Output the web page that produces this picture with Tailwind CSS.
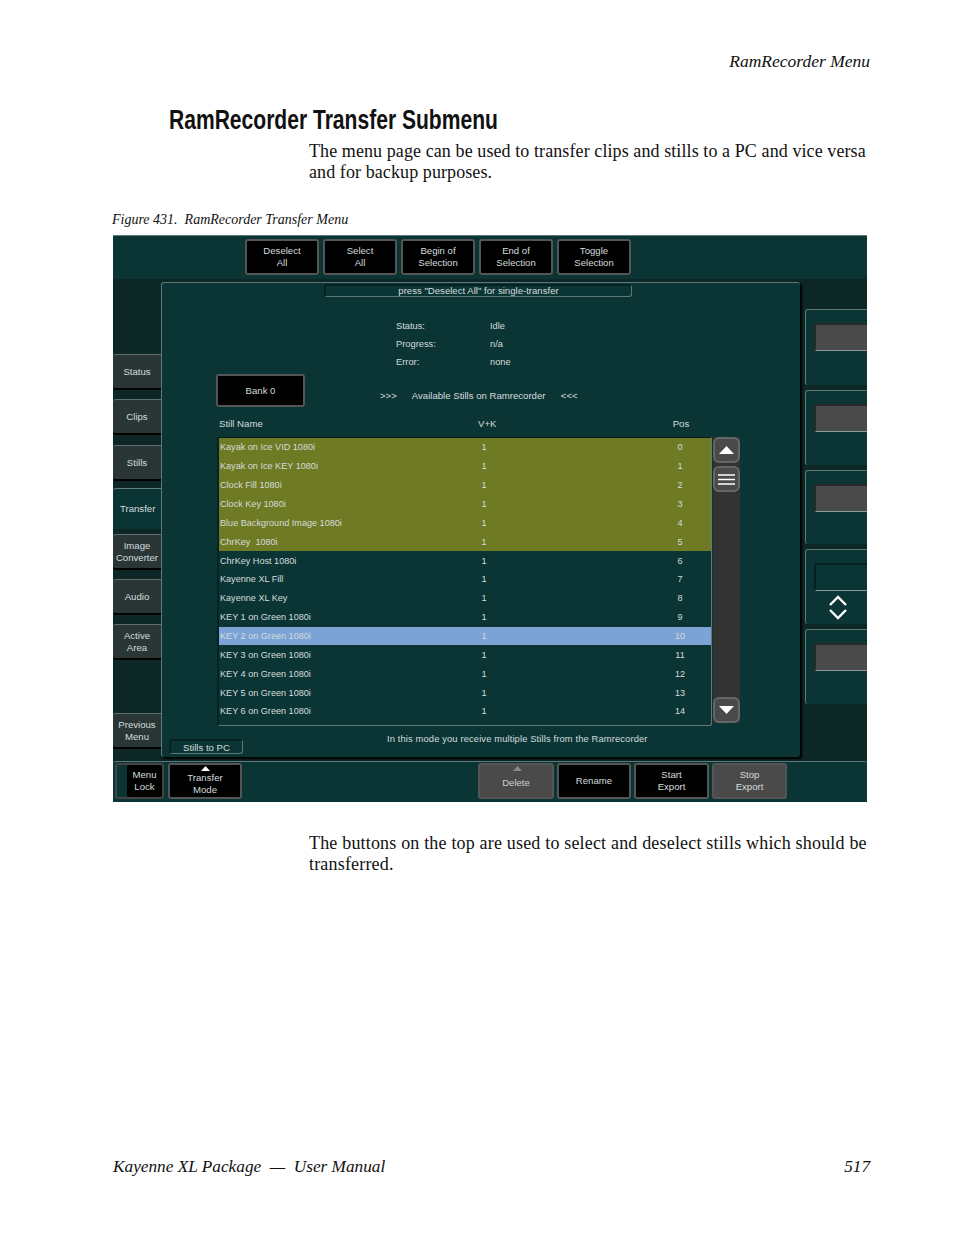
<!DOCTYPE html>
<html lang="en">
<head>
    <meta charset="UTF-8">
    <title>RamRecorder Transfer Submenu</title>
    <script src="https://cdn.jsdelivr.net/npm/@tailwindcss/browser@4"></script>
</head>
<body class="bg-white text-[#111] font-['Liberation_Serif',serif] w-[954px] h-[1235px] overflow-hidden">

    <!-- Running head -->
    <div class="pt-[51px] pr-[84px] h-[105px] text-right italic text-[17.5px] leading-[20px]">RamRecorder Menu</div>

    <h1 class="ml-[169px] pt-[1px] h-[31px] w-[421px] origin-left scale-x-[0.78] whitespace-nowrap font-['Liberation_Sans',sans-serif] font-bold text-[27px] leading-[29px]">RamRecorder Transfer Submenu</h1>

    <p class="ml-[309px] mt-[5px] w-[570px] text-[18px] leading-[21px] h-[41px] tracking-[0.09px]">The menu page can be used to transfer clips and stills to a PC and vice versa<br>and for backup purposes.</p>

    <p class="ml-[112px] mt-[29px] h-[17px] italic text-[14px] leading-[17px]">Figure 431.&nbsp; RamRecorder Transfer Menu</p>

    <!-- Menu screenshot -->
    <div class="ml-[113px] mt-[7px] w-[754px] h-[567px] bg-[#0d2626] flex flex-col font-['Liberation_Sans',sans-serif] text-[9.6px] leading-[12px] text-[#d4dcdc]">

        <!-- Top buttons -->
        <div class="h-[44px] bg-[#0b3535] border-t border-[#5d7a78] rounded-b-[3px] flex gap-[4px] pl-[132px] pt-[3px]">
            <button class="w-[74px] h-[36px] bg-black border-2 border-[#555] rounded-[3px]">Deselect<br>All</button>
            <button class="w-[74px] h-[36px] bg-black border-2 border-[#555] rounded-[3px]">Select<br>All</button>
            <button class="w-[74px] h-[36px] bg-black border-2 border-[#555] rounded-[3px]">Begin of<br>Selection</button>
            <button class="w-[74px] h-[36px] bg-black border-2 border-[#555] rounded-[3px]">End of<br>Selection</button>
            <button class="w-[74px] h-[36px] bg-black border-2 border-[#555] rounded-[3px]">Toggle<br>Selection</button>
        </div>

        <div class="h-[482px] flex">
            <!-- Left tabs -->
            <div class="w-[48px] pt-[75px] flex flex-col">
                <button class="h-[36px] mb-[9px] bg-[#2a3636] border-t border-[#5f6e6e] rounded-l-[3px] border-b-2 border-b-black">Status</button>
                <button class="h-[36px] mb-[10px] bg-[#2a3636] border-t border-[#5f6e6e] rounded-l-[3px] border-b-2 border-b-black">Clips</button>
                <button class="h-[36px] mb-[7px] bg-[#2a3636] border-t border-[#5f6e6e] rounded-l-[3px] border-b-2 border-b-black">Stills</button>
                <button class="h-[41px] mb-[5px] bg-[#0b3535] border-t border-[#5f7e7c] rounded-tl-[3px] text-left pl-[7px]">Transfer</button>
                <button class="h-[36px] mb-[9px] bg-[#2a3636] border-t border-[#5f6e6e] rounded-l-[3px] border-b-2 border-b-black">Image<br>Converter</button>
                <button class="h-[36px] mb-[9px] bg-[#2a3636] border-t border-[#5f6e6e] rounded-l-[3px] border-b-2 border-b-black">Audio</button>
                <button class="h-[36px] mb-[53px] bg-[#2a3636] border-t border-[#5f6e6e] rounded-l-[3px] border-b-2 border-b-black">Active<br>Area</button>
                <button class="h-[36px] bg-[#2a3636] border-t border-[#5f6e6e] rounded-l-[3px] border-b-2 border-b-black">Previous<br>Menu</button>
            </div>

            <!-- Center panel -->
            <div class="w-[639px] h-[475px] mt-[3px] bg-[#0b3535] border-t border-l border-[#5d7a78] rounded-[3px] shadow-[2px_2px_2px_#000] flex flex-col">
                <div class="ml-[162px] mt-[1px] w-[308px] h-[13px] border-b border-r border-[#5d7a78] border-t-2 border-t-[#082222] border-l-2 border-l-[#082222] rounded-[3px] text-center text-[9.6px] leading-[10px] shrink-0">press "Deselect All" for single-transfer</div>

                <!-- Status block -->
                <div class="ml-[234px] mt-[20px] grid grid-cols-[94px_60px] auto-rows-[18px] items-center text-[9.3px] shrink-0">
                    <span>Status:</span><span>Idle</span>
                    <span>Progress:</span><span>n/a</span>
                    <span>Error:</span><span>none</span>
                </div>

                <div class="flex mt-[3px] ml-[54px] h-[33px] shrink-0">
                    <button class="w-[89px] h-[33px] bg-black border-2 border-[#555] rounded-[3px] pt-[1px]">Bank 0</button>
                    <span class="ml-[75px] mt-[16px]">&gt;&gt;&gt;</span>
                    <span class="ml-[15px] mt-[16px] w-[149px]">Available Stills on Ramrecorder</span>
                    <span class="mt-[16px]">&lt;&lt;&lt;</span>
                </div>

                <div class="h-[30px] shrink-0">
                    <div class="grid grid-cols-[259px_173px_60px] ml-[57px] pt-[11px]">
                        <span>Still Name</span><span>V+K</span><span class="text-center">Pos</span>
                    </div>
                </div>

                <!-- List and scrollbar -->
                <div class="flex ml-[55px] shrink-0">
                    <div id="rows" class="w-[495px] h-[289px] border-r border-b border-[#5d7a78] border-t border-t-[#0a1a1a] border-l-2 border-l-[#0a2222] rounded-br-[3px]"></div>
                    <div class="ml-[1px] w-[27px] h-[286px] bg-[#333] flex flex-col justify-between">
                        <div class="flex flex-col gap-[3px]">
                            <button class="w-[27px] h-[26px] bg-[#4a4a4a] border-2 border-[#666] rounded-[6px] flex items-center justify-center">
                                <svg width="15" height="8" viewBox="0 0 15 8"><path d="M7.5 0 L15 8 H0 Z" fill="#fff"/></svg>
                            </button>
                            <button class="w-[27px] h-[26px] bg-[#4a4a4a] border-2 border-[#666] rounded-[6px] flex items-center justify-center">
                                <svg width="17" height="11" viewBox="0 0 17 11"><path d="M0 1 H17 M0 5.5 H17 M0 10 H17" stroke="#fff" stroke-width="1.3" fill="none"/></svg>
                            </button>
                        </div>
                        <button class="w-[27px] h-[26px] bg-[#4a4a4a] border-2 border-[#666] rounded-[6px] flex items-center justify-center">
                            <svg width="15" height="8" viewBox="0 0 15 8"><path d="M0 0 H15 L7.5 8 Z" fill="#fff"/></svg>
                        </button>
                    </div>
                </div>

                <!-- Mode line -->
                <div class="flex ml-[7px] mt-[2px]">
                    <div class="mt-[11px] w-[74px] h-[15px] border border-[#5d7a78] border-t-2 border-t-[#082222] border-l-2 border-l-[#082222] rounded-[3px] text-center leading-[13px]">Stills to PC</div>
                    <span class="ml-[144px] mt-[5px] text-[9.4px] tracking-[0.12px]">In this mode you receive multiple Stills from the Ramrecorder</span>
                </div>
            </div>

            <!-- Right cards -->
            <div class="w-[62px] ml-[5px] pt-[30px] flex flex-col gap-[5px]">
                <div class="h-[76px] pt-[13px] pl-[8px] bg-[#0b3535] border-t border-l border-[#5d7a78] rounded-l-[3px]"><div class="h-[28px] bg-[#4a4a4a] border-t-2 border-l-2 border-[#2a2a2a] border-b border-b-[#8a9a98] rounded-l-[2px]"></div></div>
                <div class="h-[75px] pt-[13px] pl-[8px] bg-[#0b3535] border-t border-l border-[#5d7a78] rounded-l-[3px]"><div class="h-[28px] bg-[#4a4a4a] border-t-2 border-l-2 border-[#2a2a2a] border-b border-b-[#8a9a98] rounded-l-[2px]"></div></div>
                <div class="h-[74px] pt-[13px] pl-[8px] bg-[#0b3535] border-t border-l border-[#5d7a78] rounded-l-[3px]"><div class="h-[28px] bg-[#4a4a4a] border-t-2 border-l-2 border-[#2a2a2a] border-b border-b-[#8a9a98] rounded-l-[2px]"></div></div>
                <div class="h-[75px] pt-[13px] pl-[8px] bg-[#0b3535] border-t border-l border-[#5d7a78] rounded-l-[3px]">
                    <div class="h-[28px] bg-[#0b3535] border-t-2 border-l-2 border-[#062020] border-b border-b-[#8a9a98] rounded-l-[2px]"></div>
                    <svg class="ml-[14px] mt-[4px]" width="20" height="25" viewBox="0 0 20 25"><path d="M2 10 L10 2 L18 10 M2 15 L10 23 L18 15" stroke="#fff" stroke-width="2.4" fill="none"/></svg>
                </div>
                <div class="h-[75px] pt-[13px] pl-[8px] bg-[#0b3535] border-t border-l border-[#5d7a78] rounded-l-[3px]"><div class="h-[28px] bg-[#4a4a4a] border-t-2 border-l-2 border-[#2a2a2a] border-b border-b-[#8a9a98] rounded-l-[2px]"></div></div>
            </div>
        </div>

        <!-- Bottom buttons -->
        <div class="h-[41px] bg-[#0b3535] border-t border-[#5d7a78] flex pt-[1px] pl-[2px] rounded-t-[3px]">
            <div class="w-[49px] h-[36px] pl-[10px] border-2 border-[#444] rounded-[3px]">
                <button class="w-full h-full bg-black rounded-[2px]">Menu<br>Lock</button>
            </div>
            <button class="relative ml-[4px] w-[74px] h-[36px] bg-black border-2 border-[#555] rounded-[3px] pt-[6px]">
                <svg class="absolute left-[31px] top-[1px]" width="9" height="5" viewBox="0 0 9 5"><path d="M4.5 0 L9 5 H0 Z" fill="#fff"/></svg>
                Transfer<br>Mode
            </button>
            <button class="relative ml-[236px] w-[76px] h-[36px] bg-[#4a4a4a] border-2 border-[#555] rounded-[3px] pt-[3px] text-[#cfcfcf]">
                <svg class="absolute left-[33px] top-[1px]" width="9" height="5" viewBox="0 0 9 5"><path d="M4.5 0 L9 5 H0 Z" fill="#888"/></svg>
                Delete
            </button>
            <button class="ml-[3px] w-[74px] h-[36px] bg-black border-2 border-[#555] rounded-[3px]">Rename</button>
            <button class="ml-[3px] w-[75px] h-[36px] bg-black border-2 border-[#555] rounded-[3px]">Start<br>Export</button>
            <button class="ml-[3px] w-[75px] h-[36px] bg-[#4a4a4a] border-2 border-[#555] rounded-[3px]">Stop<br>Export</button>
        </div>
    </div>

    <p class="ml-[309px] mt-[31px] w-[570px] text-[18px] leading-[21px] h-[42px] tracking-[0.18px]">The buttons on the top are used to select and deselect stills which should be<br>transferred.</p>

    <!-- Footer -->
    <div class="mt-[282px] ml-[113px] w-[757px] flex justify-between italic text-[17.25px] leading-[20px]">
        <span>Kayenne XL Package &nbsp;—&nbsp; User Manual</span>
        <span>517</span>
    </div>

    <script>
        const stills = [
            "Kayak on Ice VID 1080i", "Kayak on Ice KEY 1080i", "Clock Fill 1080i", "Clock Key 1080i",
            "Blue Background Image 1080i", "ChrKey  1080i", "ChrKey Host 1080i", "Kayenne XL Fill",
            "Kayenne XL Key", "KEY 1 on Green 1080i", "KEY 2 on Green 1080i", "KEY 3 on Green 1080i",
            "KEY 4 on Green 1080i", "KEY 5 on Green 1080i", "KEY 6 on Green 1080i"
        ];

        const rowColor = (i) => {
            if (i < 6) return "bg-[#6f7a24]";
            if (i === 10) return "bg-[#7ba3d6]";
            return "";
        };

        document.getElementById("rows").innerHTML = stills.map((name, i) => `
            <div class="h-[18.87px] grid grid-cols-[259px_10px_181px_20px] items-center pl-[1px] whitespace-pre text-[9.1px] ${rowColor(i)}">
                <span>${name}</span><span class="text-center">1</span><span></span><span class="text-center">${i}</span>
            </div>`).join("");
    </script>
</body>
</html>
